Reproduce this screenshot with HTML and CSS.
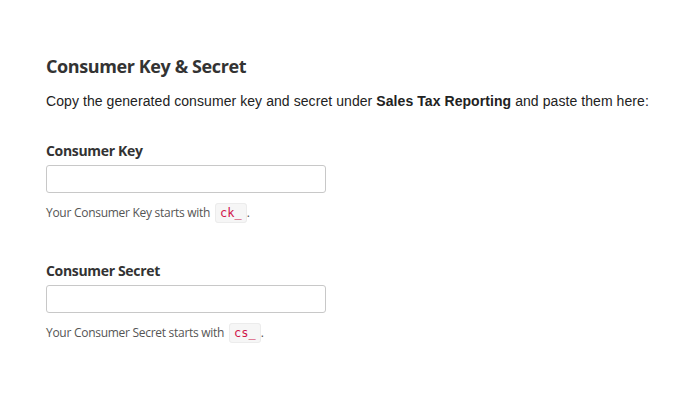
FILE: index.html
```html
<!DOCTYPE html>
<html>
<head>
<meta charset="utf-8">
<link rel="stylesheet" href="styles.css">
</head>
<body>
<div class="page">
  <h2 class="title">Consumer Key &amp; Secret</h2>
  <p class="intro">Copy the generated consumer key and secret under <strong>Sales Tax Reporting</strong> and paste them here:</p>
  <div class="field">
    <label class="label">Consumer Key</label>
    <input class="input" type="text">
    <p class="help">Your Consumer Key starts with <code>ck_</code>.</p>
  </div>
  <div class="field">
    <label class="label">Consumer Secret</label>
    <input class="input" type="text">
    <p class="help">Your Consumer Secret starts with <code>cs_</code>.</p>
  </div>
</div>
</body>
</html>
```
FILE: styles.css
```css
html, body { margin: 0; padding: 0; background: #fff; }
.page { padding: 54px 0 0 46px; }
.title {
  font-family: "Open Sans", sans-serif;
  font-weight: 700;
  font-size: 18px;
  letter-spacing: -0.4px;
  color: #333;
  margin: 0;
  line-height: 24px;
}
.intro {
  font-family: "Liberation Sans", Arial, sans-serif;
  font-size: 14px;
  letter-spacing: 0.07px;
  white-space: nowrap;
  color: #222;
  margin: 13px 0 0;
  line-height: 20px;
}
.intro strong { font-weight: 700; }
.field { display: flex; flex-direction: column; align-items: flex-start; }
.field + .field { margin-top: 8px; }
.label {
  font-family: "Open Sans", sans-serif;
  font-weight: 700;
  font-size: 14px;
  letter-spacing: -0.33px;
  color: #333;
  margin-top: 30px;
  line-height: 20px;
}
.input {
  margin: 4px 0 0;
  width: 280px;
  height: 28px;
  box-sizing: border-box;
  border: 1px solid #c8c8c8;
  border-radius: 3px;
  background: #fff;
}
.help {
  font-family: "Open Sans", sans-serif;
  font-size: 12px;
  letter-spacing: -0.28px;
  color: #555;
  margin: 10px 0 0;
  line-height: 20px;
}
.help code {
  font-family: "DejaVu Sans Mono", monospace;
  font-size: 12px;
  letter-spacing: 0;
  color: #d0144a;
  background: #f6f6f6;
  border: 1px solid #ececec;
  border-radius: 3px;
  padding: 2px 4px;
  margin-left: 2px;
}
```
